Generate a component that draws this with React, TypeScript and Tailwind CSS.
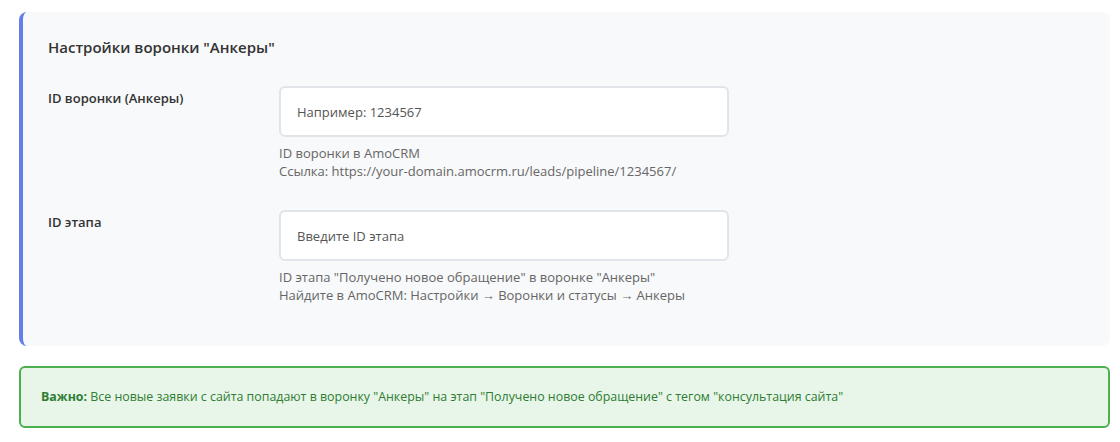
import React from 'react';

const font = { fontFamily: '"Open Sans", "Noto Sans", sans-serif' };

const Field: React.FC<{ label: string; placeholder: string; help: string[] }> = ({ label, placeholder, help }) => (
  <div className="flex">
    <label className="w-[231px] shrink-0 pt-[3px] text-[13px] font-semibold text-[#333]">{label}</label>
    <div className="flex flex-col">
      <input
        placeholder={placeholder}
        className="w-[450px] h-[51px] rounded-[6px] border-2 border-[#e1e5ea] bg-white px-[16px] text-[13px] text-[#333] placeholder:text-[#555] outline-none"
      />
      <div className="mt-[7px] text-[13px] leading-[18px] text-[#666]">
        {help.map((h) => (
          <div key={h}>{h}</div>
        ))}
      </div>
    </div>
  </div>
);

export default function App() {
  return (
    <div className="w-[1120px] h-[442px] bg-white px-[19px] pt-[12px]" style={font}>
      {/* Funnel settings panel */}
      <div className="w-[1091px] rounded-[8px] border-l-4 border-[#667eea] bg-[#f8f9fa] pl-[25px] pt-[25px] pb-[42px]">
        <h3 className="text-[15px] font-semibold leading-[20px] text-[#333]">Настройки воронки "Анкеры"</h3>
        <div className="mt-[29px] flex flex-col gap-[30px]">
          <Field
            label="ID воронки (Анкеры)"
            placeholder="Например: 1234567"
            help={['ID воронки в AmoCRM', 'Ссылка: https://your-domain.amocrm.ru/leads/pipeline/1234567/']}
          />
          <Field
            label="ID этапа"
            placeholder="Введите ID этапа"
            help={[
              'ID этапа "Получено новое обращение" в воронке "Анкеры"',
              'Найдите в AmoCRM: Настройки → Воронки и статусы → Анкеры',
            ]}
          />
        </div>
      </div>

      {/* Notice */}
      <div className="mt-[20px] w-[1091px] h-[62px] flex items-center rounded-[6px] border-2 border-[#4caf50] bg-[#e8f5e9] px-[20px] text-[12.4px] text-[#2e7d32]">
        <p>
          <strong className="font-bold">Важно:</strong> Все новые заявки с сайта попадают в воронку "Анкеры" на этап "Получено новое обращение" с тегом "консультация сайта"
        </p>
      </div>
    </div>
  );
}
